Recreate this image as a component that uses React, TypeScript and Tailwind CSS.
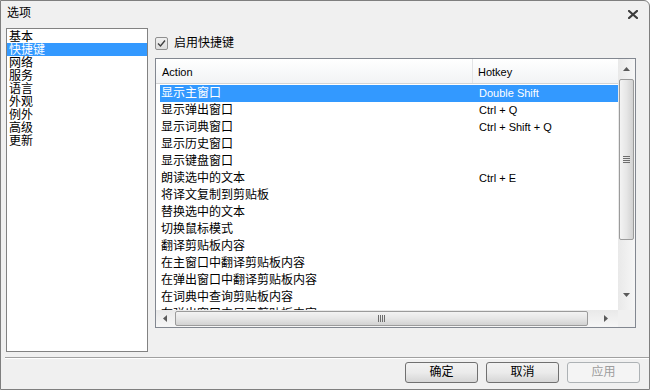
import React from "react";

type Row = { action: string; hotkey?: string };

const rows: Row[] = [
  { action: "显示主窗口", hotkey: "Double Shift" },
  { action: "显示弹出窗口", hotkey: "Ctrl + Q" },
  { action: "显示词典窗口", hotkey: "Ctrl + Shift + Q" },
  { action: "显示历史窗口" },
  { action: "显示键盘窗口" },
  { action: "朗读选中的文本", hotkey: "Ctrl + E" },
  { action: "将译文复制到剪贴板" },
  { action: "替换选中的文本" },
  { action: "切换鼠标模式" },
  { action: "翻译剪贴板内容" },
  { action: "在主窗口中翻译剪贴板内容" },
  { action: "在弹出窗口中翻译剪贴板内容" },
  { action: "在词典中查询剪贴板内容" },
  { action: "在弹出窗口中显示剪贴板内容" },
];

const pages = ["基本", "快捷键", "网络", "服务", "语言", "外观", "例外", "高级", "更新"];

function Arrow({ dir }: { dir: "up" | "down" | "left" | "right" }) {
  const pts = {
    up: "0,4 7,4 3.5,0",
    down: "0,0 7,0 3.5,4",
    left: "4,0 4,7 0,3.5",
    right: "0,0 0,7 4,3.5",
  }[dir];
  const vertical = dir === "up" || dir === "down";
  return (
    <svg width={vertical ? 7 : 4} height={vertical ? 4 : 7} aria-hidden="true">
      <polygon points={pts} fill="#5a5a5a" />
    </svg>
  );
}

function Button({ label, disabled }: { label: string; disabled?: boolean }) {
  return (
    <button
      type="button"
      className={`w-[73px] h-[21px] rounded-[3px] border text-[12px] leading-[19px] ${
        disabled
          ? "border-[#adb2b5] bg-[#f4f4f4] text-[#9d9d9d]"
          : "border-[#707070] bg-gradient-to-b from-[#f2f2f2] via-[#ebebeb] to-[#d6d6d6] text-black"
      }`}
    >
      {label}
    </button>
  );
}

export default function App() {
  return (
    <div className="w-[650px] h-[390px] bg-[#f0f0f0] border border-[#7f7f7f] rounded-tr-[6px] flex flex-col font-['Liberation_Sans','Noto_Sans_CJK_SC',sans-serif] text-black overflow-hidden">
      {/* title */}
      <div className="h-[27px] flex items-start justify-between pl-[6px] pr-[11px] pt-[5px]">
        <span className="text-[12px] leading-[14px]">选项</span>
        <svg width="10" height="9" viewBox="0 0 10 9" className="mt-[4px]" aria-hidden="true">
          <path d="M1 1 L9 8 M9 1 L1 8" stroke="#3c3c3c" strokeWidth="2.2" strokeLinecap="square" />
        </svg>
      </div>

      {/* body */}
      <div className="h-[329px] flex">
        <div className="ml-[5px] w-[142px] h-[324px] border border-[#828282] bg-white pt-[1px]">
          {pages.map((p, i) => (
            <div
              key={p}
              className={`h-[13px] leading-[14px] pl-[2px] text-[12px] ${i === 1 ? "bg-[#3399ff] text-white" : ""}`}
            >
              {p}
            </div>
          ))}
        </div>

        <div className="ml-[7px] w-[481px] flex flex-col">
          <label className="mt-[9px] h-[13px] flex items-center gap-[6px]">
            <span className="w-[13px] h-[13px] rounded-[2px] border border-[#8f8f8f] bg-gradient-to-b from-[#f0f0f0] to-[#dcdcdc] flex items-center justify-center">
              <svg width="9" height="9" viewBox="0 0 9 9" aria-hidden="true">
                <path d="M1 4.5 L3.5 7 L8 1.5" stroke="#404040" strokeWidth="1.4" fill="none" />
              </svg>
            </span>
            <span className="text-[12px] leading-[13px]">启用快捷键</span>
          </label>

          {/* table */}
          <div className="mt-[8px] h-[270px] border border-[#828790] bg-white flex flex-col">
            <div className="flex h-[251px]">
              <div className="w-[462px] flex flex-col overflow-hidden">
                <div className="h-[25px] shrink-0 flex bg-gradient-to-b from-white to-[#f2f3f5] border-b border-[#d5d5d5]">
                  <div className="w-[317px] pl-[6px] pt-[7px] text-[11px] leading-[12px] border-r border-[#e3e4e6]">
                    Action
                  </div>
                  <div className="pl-[5px] pt-[7px] text-[11px] leading-[12px]">Hotkey</div>
                </div>
                <div className="pt-[1px] pl-[4px] overflow-hidden">
                  {rows.map((r, i) => (
                    <div
                      key={r.action}
                      className={`h-[17px] flex items-center ${i === 0 ? "bg-[#3399ff] text-white" : ""}`}
                    >
                      <span className="w-[313px] pl-[1px] text-[12px] leading-[17px] whitespace-nowrap">
                        {r.action}
                      </span>
                      <span className="pl-[6px] text-[11px] leading-[17px] whitespace-nowrap">
                        {r.hotkey ?? ""}
                      </span>
                    </div>
                  ))}
                </div>
              </div>

              {/* vertical scrollbar */}
              <div className="w-[17px] bg-gradient-to-r from-[#e9e9e9] to-[#f6f6f6] flex flex-col items-center">
                <div className="h-[20px] flex items-center justify-center">
                  <Arrow dir="up" />
                </div>
                <div className="w-[15px] h-[161px] rounded-[2px] border border-[#9b9b9b] bg-gradient-to-r from-[#f3f3f3] via-[#e6e6e6] to-[#d2d2d2] flex flex-col items-center justify-center gap-[1px]">
                  <div className="w-[7px] h-[1px] bg-[#6d6d6d]" />
                  <div className="w-[7px] h-[1px] bg-[#6d6d6d]" />
                  <div className="w-[7px] h-[1px] bg-[#6d6d6d]" />
                  <div className="w-[7px] h-[1px] bg-[#6d6d6d]" />
                </div>
                <div className="flex-1" />
                <div className="h-[30px] flex items-center justify-center">
                  <Arrow dir="down" />
                </div>
              </div>
            </div>

            {/* horizontal scrollbar */}
            <div className="flex h-[17px]">
              <div className="w-[462px] bg-gradient-to-b from-[#e9e9e9] to-[#f6f6f6] flex items-center">
                <div className="w-[17px] flex items-center justify-center">
                  <Arrow dir="left" />
                </div>
                <div className="ml-[2px] w-[413px] h-[15px] rounded-[2px] border border-[#9b9b9b] bg-gradient-to-b from-[#f3f3f3] via-[#e6e6e6] to-[#d2d2d2] flex items-center justify-center gap-[1px]">
                  <div className="w-[1px] h-[7px] bg-[#6d6d6d]" />
                  <div className="w-[1px] h-[7px] bg-[#6d6d6d]" />
                  <div className="w-[1px] h-[7px] bg-[#6d6d6d]" />
                  <div className="w-[1px] h-[7px] bg-[#6d6d6d]" />
                </div>
                <div className="flex-1 flex items-center justify-center pl-[6px]">
                  <Arrow dir="right" />
                </div>
              </div>
              <div className="w-[17px] bg-[#f0f0f0]" />
            </div>
          </div>
        </div>
      </div>

      {/* separator */}
      <div className="ml-[4px] border-t border-[#a0a0a0] border-b border-b-white" />

      {/* buttons */}
      <div className="flex-1 flex justify-end items-start gap-[8px] pt-[3px] pr-[9px]">
        <Button label="确定" />
        <Button label="取消" />
        <Button label="应用" disabled />
      </div>
    </div>
  );
}
